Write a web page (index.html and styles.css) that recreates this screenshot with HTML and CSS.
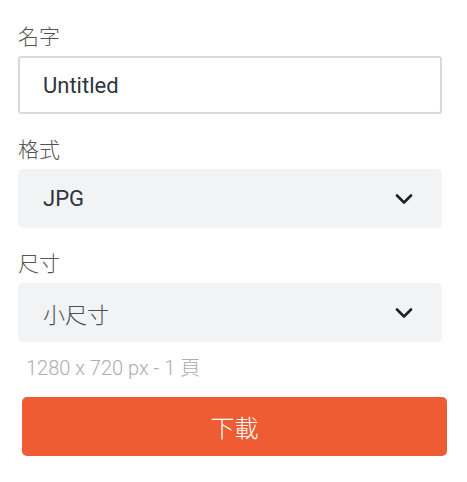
FILE: index.html
```html
<!DOCTYPE html>
<html lang="zh-Hant">
<head>
    <meta charset="UTF-8">
    <meta name="viewport" content="width=device-width, initial-scale=1.0">
    <title>下載</title>
    <link rel="stylesheet" href="styles.css">
</head>
<body>

    <!-- Export form -->
    <div class="export-panel">
        <div class="field">
            <label class="field-label" for="file-name">名字</label>
            <input type="text" id="file-name" class="text-input" value="Untitled">
        </div>

        <div class="field">
            <span class="field-label">格式</span>
            <div class="select-box">
                <span class="select-value">JPG</span>
                <svg class="chevron" width="18" height="10" viewBox="0 0 18 10"><path d="M2 1.5l7 7 7-7" fill="none" stroke="#1f2329" stroke-width="2.6" stroke-linecap="round" stroke-linejoin="round"/></svg>
            </div>
        </div>

        <div class="field">
            <span class="field-label">尺寸</span>
            <div class="select-box">
                <span class="select-value cjk">小尺寸</span>
                <svg class="chevron" width="18" height="10" viewBox="0 0 18 10"><path d="M2 1.5l7 7 7-7" fill="none" stroke="#1f2329" stroke-width="2.6" stroke-linecap="round" stroke-linejoin="round"/></svg>
            </div>
        </div>

        <p class="size-hint">1280 x 720 px - 1 頁</p>

        <button class="download-btn">下載</button>
    </div>

</body>
</html>
```

FILE: styles.css
```css
/* Global */
body {
    margin: 0;
    padding: 0;
    background: #fff;
    font-family: Roboto, "Noto Sans CJK TC", sans-serif;
    color: #2d3540;
}

.export-panel {
    width: 424px;
    padding: 20px 0 0 18px;
}

.field {
    display: flex;
    flex-direction: column;
    gap: 6px;
    margin-bottom: 19px;
}

.field-label {
    font-family: "Noto Sans CJK TC", sans-serif;
    font-weight: 300;
    font-size: 21px;
    line-height: 30px;
    color: #555;
}

/* Name input */
.text-input {
    box-sizing: border-box;
    height: 58px;
    margin: 0;
    padding: 0 0 0 23px;
    border: 2px solid #dadada;
    border-radius: 3px;
    font-family: Roboto, sans-serif;
    font-size: 22px;
    color: #2d3540;
    outline: none;
}

/* Dropdowns */
.select-box {
    height: 59px;
    display: flex;
    align-items: center;
    justify-content: space-between;
    padding: 0 29px 0 25px;
    background: #f2f3f5;
    border-radius: 5px;
}

.select-value {
    font-size: 22px;
    color: #2d3540;
}

.select-value.cjk {
    font-family: "Noto Sans CJK TC", sans-serif;
    font-weight: 300;
    font-size: 22px;
    color: #4a4f57;
}

.chevron {
    display: block;
}

.size-hint {
    margin: -6px 0 0 8px;
    font-family: Roboto, "Noto Sans CJK TC", sans-serif;
    font-weight: 300;
    font-size: 20px;
    line-height: 26px;
    color: #adadad;
}

/* Download button */
.download-btn {
    display: block;
    width: 425px;
    height: 59px;
    margin: 16px 0 0 4px;
    border: none;
    border-radius: 5px;
    background: #ef5b33;
    color: #fff;
    font-family: "Noto Sans CJK TC", sans-serif;
    font-weight: 300;
    font-size: 24px;
    cursor: pointer;
}
```
